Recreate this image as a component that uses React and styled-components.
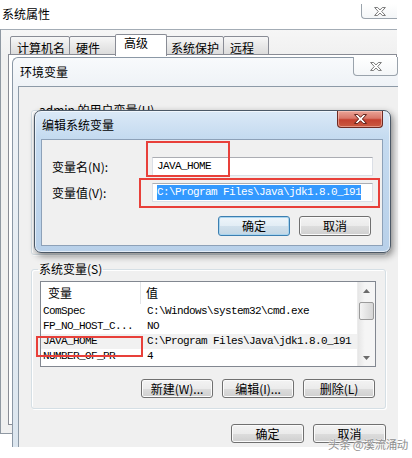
import React from 'react';
import styled, { createGlobalStyle } from 'styled-components';

const cjk = `"Noto Sans CJK SC", "Noto Sans", sans-serif`;
const mono = `"Liberation Mono", "DejaVu Sans Mono", monospace`;
const red = '#e8403a';

const GlobalStyle = createGlobalStyle`
  html, body { margin: 0; padding: 0; background: #fff; }
  body { font-family: ${cjk}; font-size: 12px; color: #000; }
`;

const systemVars = [
	{ name: 'ComSpec', value: 'C:\\Windows\\system32\\cmd.exe' },
	{ name: 'FP_NO_HOST_C...', value: 'NO' },
	{ name: 'JAVA_HOME', value: 'C:\\Program Files\\Java\\jdk1.8.0_191', hot: true },
	{ name: 'NUMBER_OF_PR', value: '4' },
	{ name: 'OS', value: 'Windows_NT' },
];

const CloseGlyph = ({ stroke = '#6d6d6d', fill = '#fff', w = 14, h = 9 }) => (
	<svg width={w} height={h} viewBox="0 0 14 10">
		<path
			d="M1 0.6h3.4L7 3.3 9.6 0.6H13L8.9 5 13 9.4H9.6L7 6.7 4.4 9.4H1L5.1 5z"
			fill={fill}
			stroke={stroke}
			strokeWidth="1"
			strokeLinejoin="round"
		/>
	</svg>
);

const Arrow = ({ up }) => (
	<svg width="7" height="4" viewBox="0 0 7 4">
		<path d={up ? 'M0 4L3.5 0 7 4z' : 'M0 0L3.5 4 7 0z'} fill="#6b6b6b" />
	</svg>
);

const App = () => (
	<>
		<GlobalStyle />
		<Desktop>
			<SysWindow>
				<SysTitleBar>
					系统属性
					<FrameClose $w={36} $h={15} $top={4}>
						<CloseGlyph />
					</FrameClose>
				</SysTitleBar>
				<SysBody>
					<TabStrip>
						<Tab $w={60}>计算机名</Tab>
						<Tab $w={48}>硬件</Tab>
						<Tab $w={52} $active>高级</Tab>
						<Tab $w={60}>系统保护</Tab>
						<Tab $w={46}>远程</Tab>
					</TabStrip>
					<TabPanel />
				</SysBody>
			</SysWindow>

			<EnvWindow>
				<EnvTitleBar>
					环境变量
					<FrameClose $w={45} $h={19} $top={-1} $round>
						<CloseGlyph />
					</FrameClose>
				</EnvTitleBar>
				<EnvClient>
					<Group $h={152}>
						<Legend>admin 的用户变量(U)</Legend>
					</Group>
					<Group $h={147} $gap={7}>
						<Legend>系统变量(S)</Legend>
						<ListWrap>
							<ListBox>
								<ListTable>
									<HeaderRow>
										<HeaderCell $first>变量</HeaderCell>
										<HeaderCell>值</HeaderCell>
									</HeaderRow>
									{systemVars.map(v => (
										<Row key={v.name} $hot={v.hot}>
											<NameCell>{v.name}</NameCell>
											<ValueCell>{v.value}</ValueCell>
										</Row>
									))}
								</ListTable>
								<ScrollBar>
									<ScrollArrow><Arrow up /></ScrollArrow>
									<Thumb />
									<ScrollTrack />
									<ScrollArrow><Arrow /></ScrollArrow>
								</ScrollBar>
							</ListBox>
							<RedBox $l={-4} $t={55} $w={107} $h={21} />
						</ListWrap>
						<ButtonRow $top={12} $pad={1}>
							<Button>新建(W)...</Button>
							<Button>编辑(I)...</Button>
							<Button>删除(L)</Button>
						</ButtonRow>
					</Group>
					<ButtonRow $top={15} $pad={0}>
						<Button $w={73}>确定</Button>
						<Button $w={73}>取消</Button>
					</ButtonRow>
				</EnvClient>
			</EnvWindow>

			<EditDialog>
				<DialogTitleBar>
					编辑系统变量
					<RedClose>
						<CloseGlyph stroke="#5a1a12" fill="#fff" w={15} h={10} />
					</RedClose>
				</DialogTitleBar>
				<DialogClient>
					<FieldRow>
						<FieldLabel>变量名(N):</FieldLabel>
						<TextBox>JAVA_HOME</TextBox>
					</FieldRow>
					<FieldRow $gap={7}>
						<FieldLabel>变量值(V):</FieldLabel>
						<TextBox><Selected>C:\Program Files\Java\jdk1.8.0_191</Selected></TextBox>
					</FieldRow>
					<ButtonRow $top={14} $pad={2}>
						<Button $default $h={20}>确定</Button>
						<Button $h={20}>取消</Button>
					</ButtonRow>
					<RedBox $l={104} $t={1} $w={84} $h={36} />
					<RedBox $l={97} $t={38} $w={241} $h={30} />
				</DialogClient>
			</EditDialog>

			<Watermark>头条 @溪流涌动</Watermark>
		</Desktop>
	</>
);

const Desktop = styled.div`
	position: relative;
	width: 412px;
	height: 458px;
	overflow: hidden;
	background: #fff;
`;

const SysWindow = styled.section`
	position: absolute;
	left: 0;
	top: 0;
	width: 397px;
	height: 434px;
	display: flex;
	flex-direction: column;
`;

const SysTitleBar = styled.header`
	position: relative;
	height: 29px;
	box-sizing: border-box;
	padding: 7px 0 0 2px;
	line-height: 14px;
	background: #fff;
`;

const FrameClose = styled.div`
	position: absolute;
	right: 0;
	top: ${p => p.$top}px;
	width: ${p => p.$w}px;
	height: ${p => p.$h}px;
	box-sizing: border-box;
	display: flex;
	align-items: center;
	justify-content: center;
	background: linear-gradient(#ffffff, #f4f6f8);
	border: 1px solid #9aa3ac;
	border-top: none;
	border-right: ${p => (p.$round ? '1px solid #9aa3ac' : 'none')};
	border-radius: ${p => (p.$round ? '0 0 4px 4px' : '0 0 0 4px')};
`;

const SysBody = styled.div`
	flex: 1;
	display: flex;
	flex-direction: column;
	padding: 6px 0 8px 7px;
	background: linear-gradient(#f6f6f6, #f0f0f0 26px);
	border-top: 1px solid #a3acb5;
	border-left: 1px solid #8f98a2;
	border-bottom: 1px solid #8f98a2;
`;

const TabStrip = styled.div`
	display: flex;
	align-items: flex-end;
	height: 19px;
	padding-left: 2px;
	position: relative;
	z-index: 1;
`;

const Tab = styled.div`
	box-sizing: border-box;
	width: ${p => p.$w}px;
	height: ${p => (p.$active ? 22 : 19)}px;
	margin: ${p => (p.$active ? '0 -2px -1px -2px' : '0 0 0 -1px')};
	padding: ${p => (p.$active ? '1px 0 0 8px' : '4px 0 0 6px')};
	line-height: 14px;
	white-space: nowrap;
	border: 1px solid #898c95;
	border-bottom: ${p => (p.$active ? 'none' : '1px solid #898c95')};
	border-radius: 2px 2px 0 0;
	background: ${p => (p.$active ? '#fff' : 'linear-gradient(#f7f7f7, #e9e9e9 50%, #dcdcdc)')};
	position: relative;
	z-index: ${p => (p.$active ? 2 : 0)};

	&:first-child {
		margin-left: 0;
	}
`;

const TabPanel = styled.div`
	flex: 1;
	border: 1px solid #898c95;
	margin-top: -1px;
	background: #fff;
`;

const EnvWindow = styled.section`
	position: absolute;
	left: 12px;
	top: 57px;
	width: 386px;
	height: 390px;
	box-sizing: border-box;
	display: flex;
	flex-direction: column;
	border: 1px solid #8b98a6;
	border-right: none;
	border-bottom: none;
	border-radius: 6px 0 0 0;
	background: linear-gradient(180deg, #f8fafc 0, #eef2f6 30px, #dce6ef 100%);
`;

const EnvTitleBar = styled.header`
	position: relative;
	height: 28px;
	box-sizing: border-box;
	padding: 7px 0 0 7px;
	line-height: 14px;
`;

const EnvClient = styled.div`
	flex: 1;
	display: flex;
	flex-direction: column;
	margin-left: 5px;
	padding: 16px 12px 0 12px;
	background: #f0f0f0;
	border-top: 1px solid #8d9aa7;
	border-left: 1px solid #8d9aa7;
`;

const Group = styled.fieldset`
	box-sizing: border-box;
	height: ${p => p.$h}px;
	min-width: 0;
	margin: ${p => p.$gap || 0}px 0 0 0;
	padding: 0 9px 0 8px;
	display: flex;
	flex-direction: column;
	border: 1px solid #d5dfe5;
	border-radius: 3px;
	box-shadow: inset 1px 1px 0 #fff, 1px 1px 0 #fff;
`;

const Legend = styled.legend`
	padding: 0 1px;
	margin-left: -2px;
	line-height: 14px;
	font-size: 12px;
	color: #000;
`;

const ListWrap = styled.div`
	position: relative;
	margin-top: 5px;
`;

const ListBox = styled.div`
	height: 86px;
	box-sizing: border-box;
	display: flex;
	border: 1px solid #828790;
	background: #fff;
`;

const ListTable = styled.div`
	flex: 1;
	overflow: hidden;
`;

const HeaderRow = styled.div`
	display: flex;
	height: 22px;
	line-height: 22px;
`;

const HeaderCell = styled.div`
	width: ${p => (p.$first ? '100px' : 'auto')};
	box-sizing: border-box;
	padding-left: ${p => (p.$first ? 7 : 5)}px;
	border-right: ${p => (p.$first ? '1px solid #e3e5e8' : 'none')};
	font-size: 12px;
`;

const Row = styled.div`
	display: flex;
	height: 15px;
	line-height: 15px;
	font-family: ${mono};
	font-size: 11px;
	letter-spacing: -0.6px;
	white-space: nowrap;
	background: ${p => (p.$hot ? '#f1f1f1' : 'transparent')};
`;

const NameCell = styled.div`
	width: 100px;
	box-sizing: border-box;
	padding-left: 2px;
	overflow: hidden;
`;

const ValueCell = styled.div`
	padding-left: 6px;
`;

const ScrollBar = styled.div`
	width: 17px;
	display: flex;
	flex-direction: column;
	align-items: center;
	border-left: 1px solid #ececec;
	background: linear-gradient(90deg, #e6e6e6, #f5f5f5 40%, #f5f5f5);
`;

const ScrollArrow = styled.div`
	height: 17px;
	width: 100%;
	display: flex;
	align-items: center;
	justify-content: center;
`;

const Thumb = styled.div`
	width: 15px;
	height: 18px;
	margin-top: 3px;
	box-sizing: border-box;
	border: 1px solid #9a9a9a;
	border-radius: 2px;
	background: linear-gradient(90deg, #f4f4f4, #e4e4e4 50%, #d6d6d6);
`;

const ScrollTrack = styled.div`
	flex: 1;
`;

const ButtonRow = styled.div`
	display: flex;
	justify-content: flex-end;
	gap: 9px;
	margin-top: ${p => p.$top}px;
	padding-right: ${p => p.$pad}px;
`;

const Button = styled.button`
	box-sizing: border-box;
	width: ${p => p.$w || 72}px;
	height: ${p => p.$h || 19}px;
	padding: 0;
	font-family: ${cjk};
	font-size: 12px;
	line-height: 14px;
	color: #000;
	white-space: nowrap;
	border: 1px solid ${p => (p.$default ? '#3c7fb1' : '#707070')};
	border-radius: 3px;
	background: ${p => (p.$default
		? 'linear-gradient(#eef5fa 0%, #e2edf5 50%, #d0e0ec 51%, #c3d6e4 100%)'
		: 'linear-gradient(#f3f3f3 0%, #ebebeb 50%, #dddddd 51%, #cfcfcf 100%)')};
	box-shadow: inset 0 0 0 1px ${p => (p.$default ? '#a9d4ee' : '#fbfbfb')};
`;

const EditDialog = styled.section`
	position: absolute;
	left: 34px;
	top: 110px;
	width: 357px;
	height: 143px;
	box-sizing: border-box;
	display: flex;
	flex-direction: column;
	border: 1px solid #4b5866;
	border-radius: 7px;
	background: linear-gradient(180deg, #dbe9f7 0%, #c5dbf0 26px, #b8d0e9 100%);
	box-shadow: 2px 3px 7px rgba(0, 0, 0, 0.45), inset 0 0 0 1px rgba(255, 255, 255, 0.6);
`;

const DialogTitleBar = styled.header`
	position: relative;
	height: 28px;
	box-sizing: border-box;
	padding: 7px 0 0 7px;
	line-height: 14px;
`;

const RedClose = styled.div`
	position: absolute;
	right: 7px;
	top: 0;
	width: 46px;
	height: 17px;
	box-sizing: border-box;
	display: flex;
	align-items: center;
	justify-content: center;
	border: 1px solid #6e2a22;
	border-top: none;
	border-radius: 0 0 4px 4px;
	background: linear-gradient(#eaa497 0%, #d9786a 45%, #c4412f 55%, #c95a40 100%);
	box-shadow: inset 0 0 0 1px rgba(255, 210, 200, 0.5);
`;

const DialogClient = styled.div`
	position: relative;
	flex: 1;
	margin: 0 7px 6px 6px;
	padding: 17px 9px 0 10px;
	background: #f0f0f0;
	border: 1px solid #8da1b8;
`;

const FieldRow = styled.div`
	display: grid;
	grid-template-columns: 100px 1fr;
	align-items: center;
	height: 19px;
	margin-top: ${p => p.$gap || 0}px;
`;

const FieldLabel = styled.span`
	line-height: 14px;
	white-space: nowrap;
`;

const TextBox = styled.div`
	height: 19px;
	box-sizing: border-box;
	padding: 0 4px;
	border: 1px solid #dbdfe6;
	border-top-color: #abadb3;
	background: #fff;
	font-family: ${mono};
	font-size: 11px;
	letter-spacing: -0.6px;
	line-height: 17px;
	white-space: nowrap;
	overflow: hidden;
`;

const Selected = styled.span`
	background: #3399ff;
	color: #fff;
	padding: 1px 0 2px;
`;

const RedBox = styled.div`
	position: absolute;
	left: ${p => p.$l}px;
	top: ${p => p.$t}px;
	width: ${p => p.$w}px;
	height: ${p => p.$h}px;
	box-sizing: border-box;
	border: 2px solid ${red};
	pointer-events: none;
`;

const Watermark = styled.div`
	position: absolute;
	left: 328px;
	top: 437px;
	font-size: 11.5px;
	line-height: 15px;
	letter-spacing: -0.3px;
	color: #8e8e8e;
	text-shadow: 0 0 2px #fff, 0 0 1px #fff;
	white-space: nowrap;
`;

export default App;
